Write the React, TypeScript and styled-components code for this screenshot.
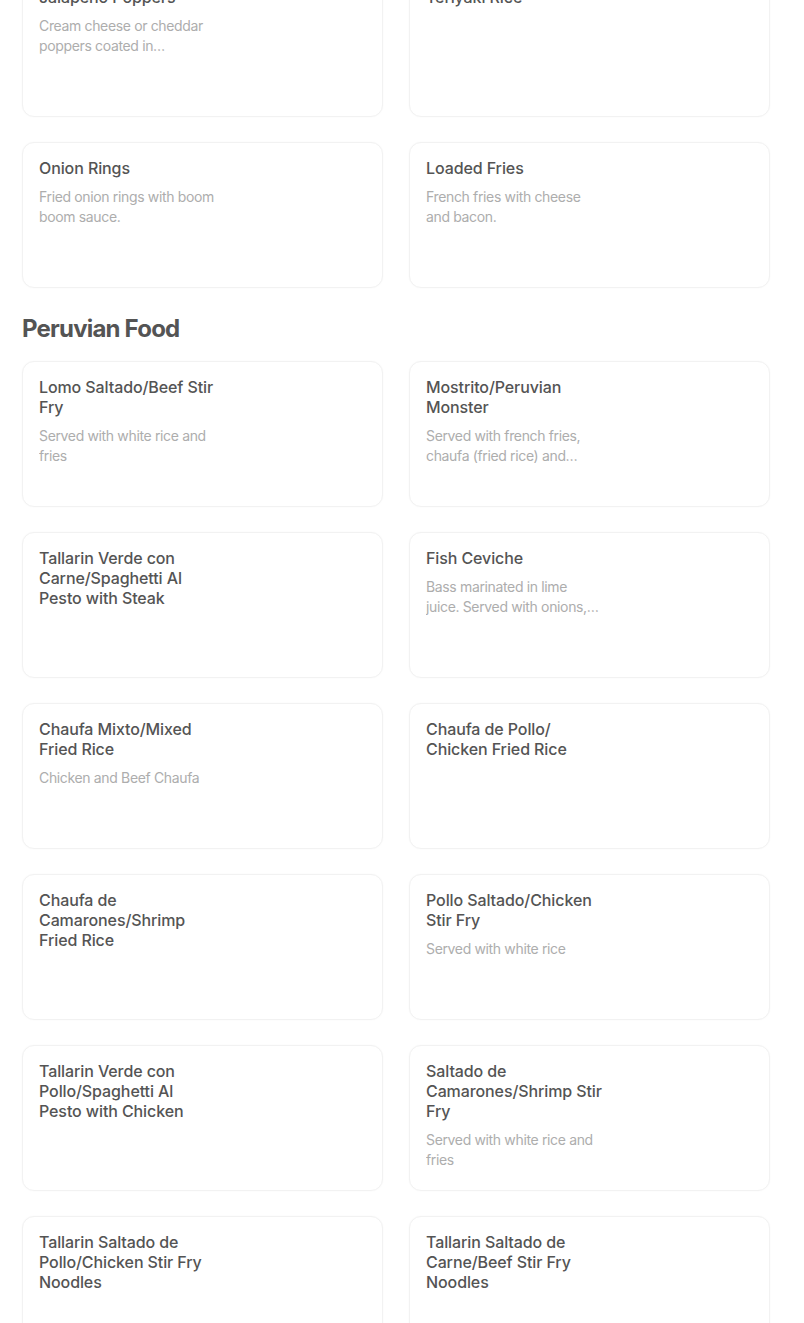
import React from 'react';
import styled, { createGlobalStyle } from 'styled-components';

type MenuItem = {
    title: string
    description?: string
}

const topItems: Array<MenuItem> = [
    { title: 'Jalapeño Poppers', description: 'Cream cheese or cheddar poppers coated in breadcrumbs and fried golden.' },
    { title: 'Teriyaki Rice' },
    { title: 'Onion Rings', description: 'Fried onion rings with boom boom sauce.' },
    { title: 'Loaded Fries', description: 'French fries with cheese and bacon.' },
]

const peruvianItems: Array<MenuItem> = [
    { title: 'Lomo Saltado/Beef Stir Fry', description: 'Served with white rice and fries' },
    { title: 'Mostrito/Peruvian Monster', description: 'Served with french fries, chaufa (fried rice) and broaster chicken.' },
    { title: 'Tallarin Verde con Carne/Spaghetti Al Pesto with Steak' },
    { title: 'Fish Ceviche', description: 'Bass marinated in lime juice. Served with onions, sweet potato and corn.' },
    { title: 'Chaufa Mixto/Mixed Fried Rice', description: 'Chicken and Beef Chaufa' },
    { title: 'Chaufa de Pollo/ Chicken Fried Rice' },
    { title: 'Chaufa de Camarones/Shrimp Fried Rice' },
    { title: 'Pollo Saltado/Chicken Stir Fry', description: 'Served with white rice' },
    { title: 'Tallarin Verde con Pollo/Spaghetti Al Pesto with Chicken' },
    { title: 'Saltado de Camarones/Shrimp Stir Fry', description: 'Served with white rice and fries' },
    { title: 'Tallarin Saltado de Pollo/Chicken Stir Fry Noodles' },
    { title: 'Tallarin Saltado de Carne/Beef Stir Fry Noodles' },
]

const ItemGrid = (props: { items: Array<MenuItem> }) => {
    return (
        <Grid>
            {props.items.map((item) => {
                return (
                    <Card key={item.title}>
                        <CardText>
                            <ItemTitle>{item.title}</ItemTitle>
                            {item.description ? <ItemDescription>{item.description}</ItemDescription> : ""}
                        </CardText>
                    </Card>
                )
            })}
        </Grid>
    )
}

const App = () => {
    return (
        <>
            <GlobalStyle />
            <Page>
                <ItemGrid items={topItems} />
                <SectionTitle>Peruvian Food</SectionTitle>
                <ItemGrid items={peruvianItems} />
            </Page>
        </>
    )
}

const GlobalStyle = createGlobalStyle`
    html, body {
        margin: 0;
        padding: 0;
        background: #ffffff;
        overflow: hidden;
    }
    body {
        font-family: Inter, Roboto, "Liberation Sans", sans-serif;
    }
`

const Page = styled.div`
    /* page is scrolled: first row is partly above the fold */
    margin-top: -29px;
    padding: 0 34px 0 22px;
`

const Grid = styled.div`
    display: grid;
    grid-template-columns: 361px 361px;
    column-gap: 26px;
    row-gap: 25px;
`

const Card = styled.div`
    box-sizing: border-box;
    height: 146px;
    border: 1px solid #f2f2f2;
    border-radius: 12px;
    padding: 15px 16px;
    background: #fff;
    box-shadow: 0 0 2px rgba(0, 0, 0, 0.03);
`

const CardText = styled.div`
    max-width: 178px;
    display: flex;
    flex-direction: column;
`

const ItemTitle = styled.div`
    font-size: 16px;
    line-height: 20px;
    font-weight: 500;
    letter-spacing: -0.1px;
    color: #545454;
`

const ItemDescription = styled.div`
    max-width: 176px;
    margin-top: 9px;
    font-size: 14px;
    line-height: 20px;
    letter-spacing: -0.35px;
    color: #adadad;
    display: -webkit-box;
    -webkit-line-clamp: 2;
    -webkit-box-orient: vertical;
    overflow: hidden;
`

const SectionTitle = styled.h2`
    margin: 25px 0 16px 0;
    font-size: 24px;
    line-height: 32px;
    font-weight: 700;
    letter-spacing: -0.8px;
    color: #545454;
`

export default App
